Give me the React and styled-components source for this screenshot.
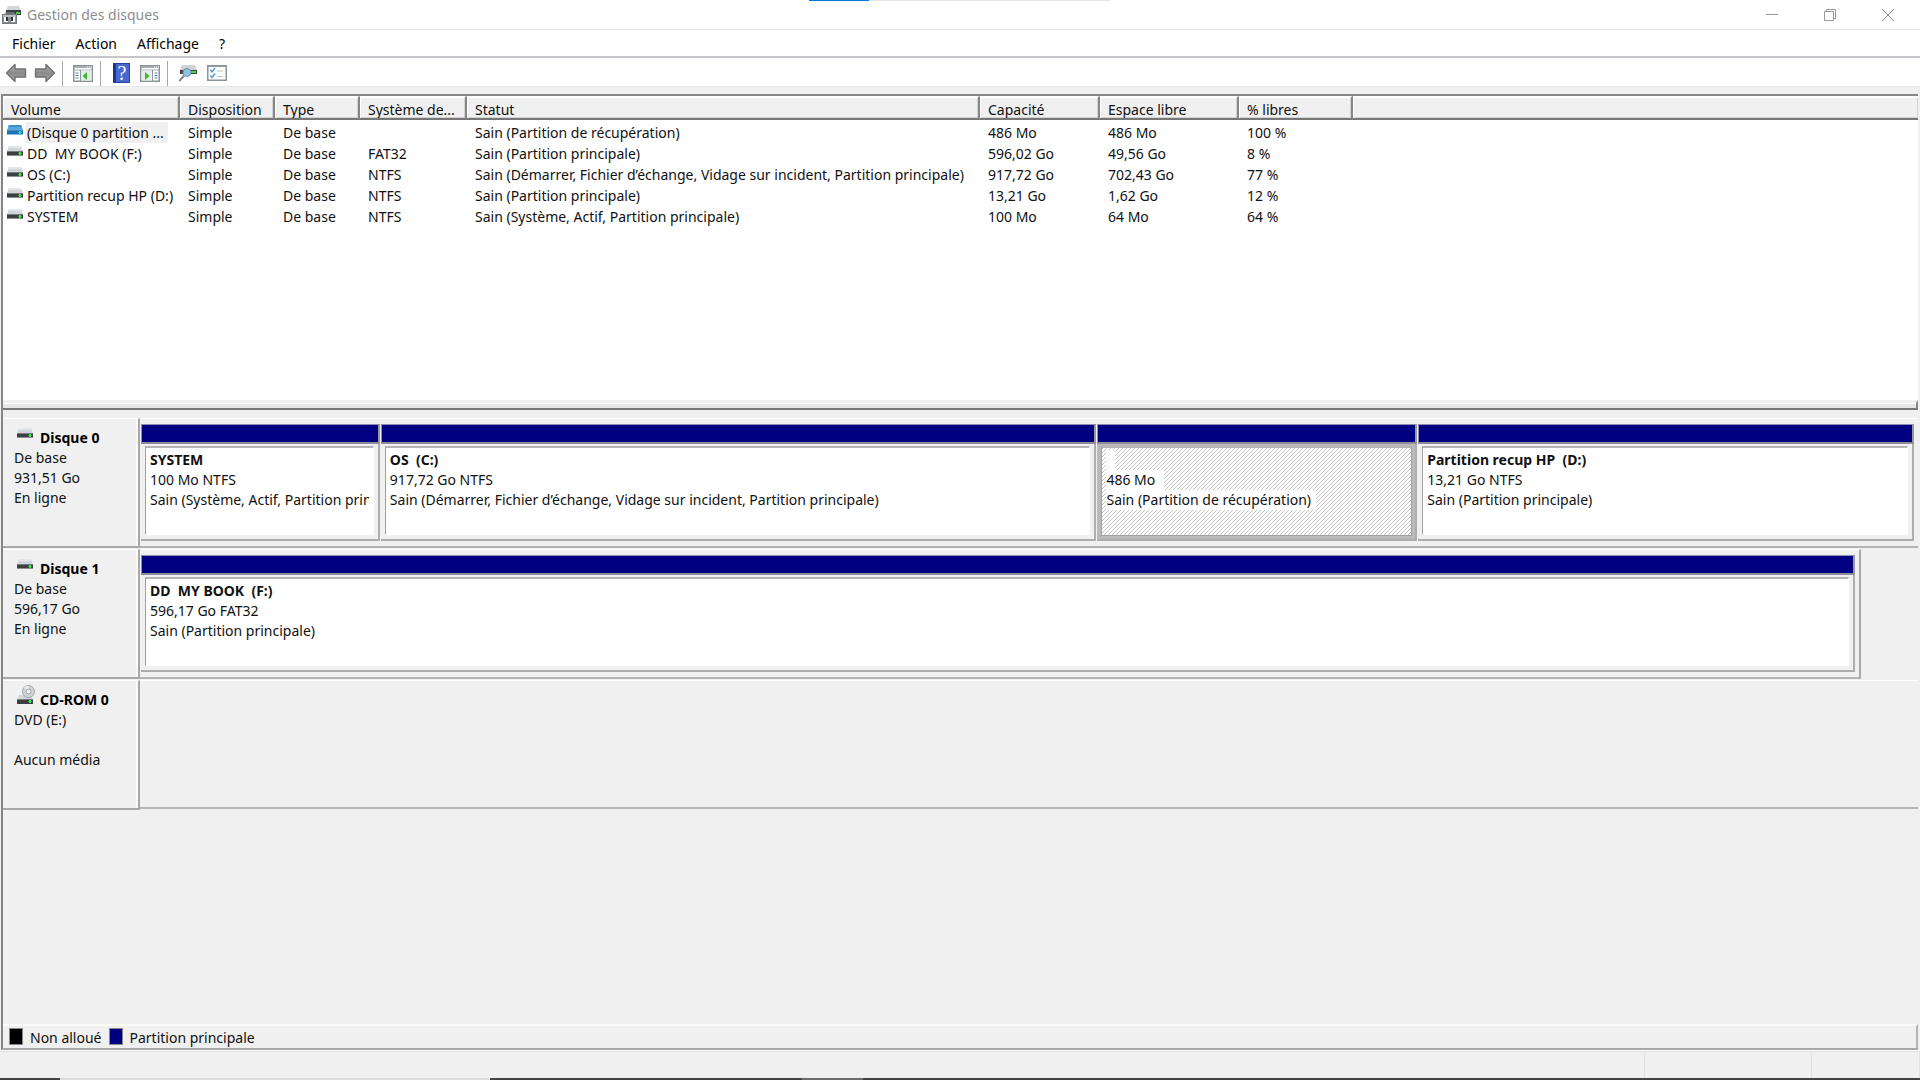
import React from "react";
import styled, { createGlobalStyle } from "styled-components";

const GlobalStyle = createGlobalStyle`
  * {
    box-sizing: border-box;
  }
  body {
    margin: 0;
    background: #f0f0f0;
    color: #111;
    font-family: "Noto Sans", "Open Sans", sans-serif;
    font-size: 14px;
    line-height: 20px;
  }
  button {
    padding: 0;
    border: 0;
    background: none;
    color: inherit;
    font: inherit;
  }
`;

const Window = styled.div`
  display: flex;
  flex-direction: column;
  min-height: 100vh;
`;

/* title bar */

const TitleBar = styled.header`
  display: flex;
  align-items: center;
  height: 30px;
  padding: 0 3px 0 2px;
  background: #fff;
  border-bottom: 1px solid #e6e6e6;
`;
const Title = styled.h1`
  flex: 1;
  margin: 0 0 0 5px;
  color: #8e8e8e;
  font-size: 14px;
  font-weight: 400;
`;
const WindowButton = styled.button`
  display: flex;
  justify-content: center;
  align-items: center;
  width: 58px;
  height: 28px;
`;
const ProgressTrack = styled.div`
  position: absolute;
  top: 0;
  left: 809px;
  width: 301px;
  height: 1px;
  background: #e5e5e5;
`;
const ProgressFill = styled.div`
  width: 20%;
  height: 1px;
  background: #0078d7;
`;

/* menu and tool bars */

const MenuBar = styled.nav`
  display: flex;
  align-items: center;
  gap: 20px;
  height: 28px;
  padding: 2px 12px 0;
  background: #fff;
  border-bottom: 2px solid #c4c4c9;
`;
const MenuButton = styled.button`
  color: #000;
`;
const ToolBar = styled.div`
  display: flex;
  align-items: center;
  height: 29px;
  padding: 2px 4px 0;
  background: #fff;
  border-bottom: 1px solid #e6e6e6;
`;
const ToolButton = styled.button`
  display: flex;
  justify-content: center;
  align-items: center;
  width: 24px;
  height: 24px;
  margin-right: 5px;
`;
const ToolSeparator = styled.div`
  width: 1px;
  height: 25px;
  margin: 0 8px 0 0;
  background: #a8a8a8;
`;

/* panes */

const Panes = styled.main`
  display: flex;
  flex: 1;
  flex-direction: column;
  margin: 7px 2px 0 1px;
  border: 2px solid #a8a8a8;
  border-top-color: #868686;
  border-left-color: #868686;
  border-right: 0;
`;
const VolumePane = styled.section`
  display: flex;
  flex: 316 1 0;
  flex-direction: column;
  background: #fff;
`;
const VolumeArea = styled.div`
  flex: 1;
`;
const Splitter = styled.div`
  height: 10px;
  border-top: 3px solid #f0f0f0;
  border-bottom: 2px solid #777;
  border-right: 2px solid #888;
  background: #e6e6e6;
  box-shadow: inset 0 1px #fff;
`;
const DiskPane = styled.section`
  flex: 611 1 0;
  padding-top: 8px;
  background: #f0f0f0;
`;

/* volume table */

const VolumeTable = styled.table`
  width: 100%;
  border-collapse: separate;
  border-spacing: 0;
  table-layout: fixed;
`;
const HeadCell = styled.th`
  height: 24px;
  padding: 4px 0 0 8px;
  overflow: hidden;
  border-top: 1px solid #fff;
  border-right: ${(props) => (props.$last ? "0" : "2px solid #868686")};
  border-bottom: 2px solid #777;
  background: #f0f0f0;
  box-shadow: inset 1px 1px #fff, inset -1px -1px #d4d4d4;
  font-weight: 400;
  line-height: 17px;
  text-align: left;
  white-space: nowrap;
`;
const Cell = styled.td`
  height: 21px;
  padding: 0 0 0 8px;
  line-height: 21px;
  white-space: pre;
`;
const NameCell = styled(Cell)`
  padding-left: 3px;
`;
const NameHolder = styled.div`
  display: flex;
  align-items: flex-start;
  gap: 1px;

  svg {
    margin-top: 3px;
  }
`;
const VolumeName = styled.span`
  padding: 0 4px 0 2px;
  background: ${(props) => (props.$selected ? "#f0f0f0" : "none")};
`;
const Body = styled.tbody`
  &::before {
    content: "";
    display: block;
    height: 2px;
  }
`;

/* disks */

const DiskRow = styled.article`
  display: flex;
  height: 131px;
`;
const DiskLabel = styled.div`
  flex: none;
  width: 137px;
  height: 130px;
  padding: 9px 0 0 11px;
  border: 1px solid #fff;
  border-right: 2px solid #a8a8a8;
  border-bottom: 2px solid #a8a8a8;
  border-left: 0;
  box-shadow: inset -2px 0 #fafafa;
`;
const DiskHead = styled.div`
  display: flex;
  gap: 6px;
  height: 20px;
  padding-left: 2px;
`;
const DiskName = styled.h2`
  margin: 0;
  color: #000;
  font-size: 14px;
  font-weight: 700;
`;
const Line = styled.div`
  min-height: 20px;
  white-space: pre;
`;
const DiskTrack = styled.div`
  display: flex;
  flex: ${(props) => props.$share} 1 0;
  gap: 1px;
  min-width: 0;
  height: ${(props) => (props.$empty ? "129px" : "130px")};
  padding: 5px 4px 5px 1px;
  border-top: 1px solid #fff;
  border-bottom: 2px solid #b4b4b4;
  border-right: ${(props) => (props.$share < 1000 ? "2px solid #a8a8a8" : "0")};
`;
const TrackRest = styled.div`
  flex: ${(props) => props.$share} 1 0;
`;
const Partition = styled.div`
  display: flex;
  flex: ${(props) => props.$share} 1 0;
  flex-direction: column;
  min-width: 0;
`;
const PartitionBar = styled.div`
  height: 20px;
  border: 1px solid #8c8cb4;
  border-right: 2px solid #999;
  border-bottom: 2px solid #8c8c9c;
  background: #000080;
`;
const PartitionFrame = styled.div`
  flex: 1;
  padding: ${(props) => (props.$selected ? "2px 3px 3px 4px" : "2px 4px 4px 4px")};
  border-right: 2px solid #adadad;
  border-bottom: 2px solid #adadad;
  background: ${(props) => (props.$selected ? "#bababa" : "#f0f0f0")};
`;
const PartitionBody = styled.div`
  height: 100%;
  padding: 2px 4px;
  border: 1px solid ${(props) => (props.$selected ? "#a0a0a0" : "#fff")};
  border-top: 2px solid #b4b4b4;
  border-left: 1px solid #a0a0a0;
  background: ${(props) =>
    props.$selected
      ? "0 0 / 4px 4px linear-gradient(135deg, #c6c6c6 12.5%, #fff 12.5% 50%, #c6c6c6 50% 62.5%, #fff 62.5%)"
      : "#fff"};
`;
const PartitionLine = styled.div`
  height: 20px;
  overflow: hidden;
  font-weight: ${(props) => (props.$bold ? 700 : 400)};
  white-space: pre;
`;
const LineText = styled.span`
  display: inline-block;
  min-width: 9px;
  min-height: 20px;
  padding-right: ${(props) => (props.$selected ? "5px" : "0")};
  background: #fff;
`;

/* legend, status bar, top edge of the task bar */

const Legend = styled.footer`
  display: flex;
  align-items: center;
  gap: 7px;
  height: 24px;
  padding: 1px 0 0 6px;
  border-top: 2px solid #fafafa;
  border-right: 2px solid #b4b4b4;
`;
const Swatch = styled.span`
  width: 14px;
  height: 17px;
  margin-bottom: 2px;
  border: 1px solid #888;
  background: ${(props) => props.$color};
`;
const StatusBar = styled.div`
  display: flex;
  height: 28px;
  padding-top: 2px;
  border-top: 1px solid #fff;
  box-shadow: inset 0 1px #e0e0e0;
`;
const StatusCell = styled.div`
  flex: ${(props) => props.$share} 1 0;
  border-right: 1px solid #e2e2e2;
`;
const TaskBar = styled.div`
  display: flex;
  height: 2px;
  background: #444;
`;
const TaskItem = styled.div`
  flex: ${(props) => props.$share} 1 0;
  background: ${(props) => props.$color};
`;

/* icons */

const DriveIcon = ({ blue }) => (
  <svg width="18" height="12" viewBox="0 0 18 12" aria-hidden="true">
    <path d="M3 0h12l2 5H1z" fill={blue ? "#5aa7dc" : "#d3d6d9"} />
    <path d="M3 0h12l1 2H2z" fill={blue ? "#3d8ec9" : "#e3e5e7"} />
    <rect x="1" y="5" width="16" height="5" fill={blue ? "#1f73b5" : "#3c3f42"} />
    <path d="M1 5.500h16" stroke={blue ? "#3b8fca" : "#777b7e"} />
    <path d="M1 9.500h16" stroke={blue ? "#7db9e2" : "#8c9093"} />
    <rect x="12" y="7" width="4" height="1" fill={blue ? "#2cc0a0" : "#2faa3a"} />
    <rect x="13" y="6" width="2" height="3" fill={blue ? "#35d0b0" : "#47e04c"} />
  </svg>
);

const CdIcon = () => (
  <svg width="18" height="20" viewBox="0 5 18 20" overflow="visible" aria-hidden="true">
    <path d="M3 10h12l2 5H1z" fill="#d3d6d9" />
    <circle cx="12.500" cy="6.500" r="6" fill="#d2d4d6" stroke="#a4a7aa" />
    <path d="M12.500 6.500L8 2.500A6 6 0 0 1 12.500 1z" fill="#eef0f1" />
    <circle cx="12.500" cy="6.500" r="2.500" fill="#f5f5f5" stroke="#a0a3a6" />
    <rect x="1" y="14" width="16" height="5" fill="#3c3f42" />
    <path d="M1 14.500h16" stroke="#777b7e" />
    <rect x="12" y="16" width="4" height="1" fill="#2faa3a" />
    <rect x="13" y="15" width="2" height="3" fill="#47e04c" />
  </svg>
);

const AppIcon = () => (
  <svg width="20" height="20" viewBox="0 0 20 20" aria-hidden="true">
    <path d="M6 1h11l2 5H4z" fill="#d3d6d9" />
    <rect x="4" y="5" width="15" height="5" fill="#3c3f42" />
    <rect x="14" y="7" width="4" height="2" fill="#3fd447" />
    <path d="M3 10V8h9v2" fill="none" stroke="#999b9d" />
    <rect x="0.500" y="9.500" width="14" height="9" fill="#8b8e90" stroke="#77797b" />
    <rect x="1" y="10" width="13" height="2" fill="#b9bbbd" />
    <rect x="2" y="12" width="4" height="5" fill="#fff" />
    <rect x="4" y="12" width="2" height="4" fill="#333" />
    <rect x="9" y="12" width="4" height="5" fill="#fff" />
    <rect x="9" y="12" width="2" height="4" fill="#333" />
  </svg>
);

const ArrowIcon = ({ right }) => (
  <svg width="22" height="20" viewBox="0 0 22 20" aria-hidden="true">
    <defs>
      <linearGradient id="arrow" x1="0" y1="0" x2="0" y2="1">
        <stop offset="0" stopColor="#b8b8b8" />
        <stop offset="0.500" stopColor="#8a8a8a" />
        <stop offset="1" stopColor="#aaa" />
      </linearGradient>
    </defs>
    <path
      d="M1.500 10L10 1.500V6h10.500v8H10v4.500z"
      transform={right ? "matrix(-1 0 0 1 22 0)" : undefined}
      fill="url(#arrow)"
      stroke="#707070"
      strokeWidth="1.400"
      strokeLinejoin="round"
    />
  </svg>
);

const PaneIcon = ({ right }) => (
  <svg width="20" height="17" viewBox="0 0 20 17" aria-hidden="true">
    <rect x="0.750" y="0.750" width="18.500" height="15.500" fill="#fff" stroke="#8a929a" strokeWidth="1.500" />
    <rect x="1" y="1" width="18" height="2" fill="#a3abb3" />
    <path d="M1 5h18" stroke="#a3abb3" />
    <path d="M14 2h1M16 2h1M18 2h1" stroke="#fff" />
    {right ? (
      <>
        <rect x="1.500" y="5.500" width="10" height="10" fill="#e6ebe9" />
        <path d="M12.500 5v11" stroke="#8a929a" />
        <path d="M14.500 8h3M14.500 10.500h3M14.500 13h3" stroke="#4a80c0" />
        <path d="M5 7v8l4.500-4z" fill="#3eb82c" />
      </>
    ) : (
      <>
        <rect x="8" y="5.500" width="10.500" height="10" fill="#e6ebe9" />
        <path d="M7.500 5v11" stroke="#8a929a" />
        <path d="M2.500 8h3M2.500 10.500h3M2.500 13h3" stroke="#4a80c0" />
        <path d="M14 7v8l-4.500-4z" fill="#3eb82c" />
      </>
    )}
  </svg>
);

const HelpMark = styled.span`
  display: flex;
  justify-content: center;
  align-items: center;
  width: 17px;
  height: 20px;
  border: 1px solid #2440a0;
  border-left: 3px solid #1c348c;
  background: #4868d0;
  color: #fff;
  font-family: "Liberation Serif", serif;
  font-size: 20px;
`;

const FindDriveIcon = () => (
  <svg width="20" height="18" viewBox="0 0 20 18" overflow="visible" aria-hidden="true">
    <path d="M4 1h13l2 5H2z" fill="#cfd3d6" />
    <rect x="2" y="6" width="17" height="4" fill="#3f4346" />
    <path d="M13 8h5" stroke="#42dc48" strokeWidth="2" />
    <path d="M6 11.500L1.500 17" stroke="#7e8b96" strokeWidth="2" />
    <circle cx="9" cy="8.500" r="4" fill="#8fc0e0" stroke="#7594aa" />
  </svg>
);

const ChecklistIcon = () => (
  <svg width="20" height="16" viewBox="0 0 20 16" aria-hidden="true">
    <rect x="0.750" y="0.750" width="18.500" height="14.500" fill="#fdfdfd" stroke="#8a929a" strokeWidth="1.500" />
    <path d="M1 1.500h18" stroke="#929aa2" />
    <path d="M3.500 5l1.500 2 3-4M3.500 10.500l1.500 2 3-4" fill="none" stroke="#3a9be0" strokeWidth="1.300" />
    <path d="M10 6h6M10 11.500h6" stroke="#c4c4c4" />
  </svg>
);

const columns = [
  { name: "Volume", width: 177 },
  { name: "Disposition", width: 95 },
  { name: "Type", width: 85 },
  { name: "Système de...", width: 107 },
  { name: "Statut", width: 513 },
  { name: "Capacité", width: 120 },
  { name: "Espace libre", width: 139 },
  { name: "% libres", width: 114 },
];

const volumes = [
  ["(Disque 0 partition ...", "Simple", "De base", "", "Sain (Partition de récupération)", "486 Mo", "486 Mo", "100 %"],
  ["DD  MY BOOK (F:)", "Simple", "De base", "FAT32", "Sain (Partition principale)", "596,02 Go", "49,56 Go", "8 %"],
  ["OS (C:)", "Simple", "De base", "NTFS", "Sain (Démarrer, Fichier d’échange, Vidage sur incident, Partition principale)", "917,72 Go", "702,43 Go", "77 %"],
  ["Partition recup HP (D:)", "Simple", "De base", "NTFS", "Sain (Partition principale)", "13,21 Go", "1,62 Go", "12 %"],
  ["SYSTEM", "Simple", "De base", "NTFS", "Sain (Système, Actif, Partition principale)", "100 Mo", "64 Mo", "64 %"],
];

const disks = [
  {
    name: "Disque 0",
    lines: ["De base", "931,51 Go", "En ligne"],
    share: 1000,
    partitions: [
      { share: 239, name: "SYSTEM", size: "100 Mo NTFS", status: "Sain (Système, Actif, Partition principale)" },
      { share: 716, name: "OS  (C:)", size: "917,72 Go NTFS", status: "Sain (Démarrer, Fichier d’échange, Vidage sur incident, Partition principale)" },
      { share: 320, name: "", size: "486 Mo ", status: "Sain (Partition de récupération)", selected: true },
      { share: 496, name: "Partition recup HP  (D:)", size: "13,21 Go NTFS", status: "Sain (Partition principale)" },
    ],
  },
  {
    name: "Disque 1",
    lines: ["De base", "596,17 Go", "En ligne"],
    share: 968,
    partitions: [
      { share: 1, name: "DD  MY BOOK  (F:)", size: "596,17 Go FAT32", status: "Sain (Partition principale)" },
    ],
  },
  {
    name: "CD-ROM 0",
    cd: true,
    lines: ["DVD (E:)", "", "Aucun média"],
    share: 1000,
    partitions: [],
  },
];

const PartitionBox = ({ part }) => (
  <Partition $share={part.share}>
    <PartitionBar />
    <PartitionFrame $selected={part.selected}>
      <PartitionBody $selected={part.selected}>
        <PartitionLine $bold>
          <LineText>{part.name}</LineText>
        </PartitionLine>
        <PartitionLine>
          <LineText $selected={part.selected}>{part.size}</LineText>
        </PartitionLine>
        <PartitionLine>
          <LineText $selected={part.selected}>{part.status}</LineText>
        </PartitionLine>
      </PartitionBody>
    </PartitionFrame>
  </Partition>
);

const App = () => {
  return (
    <Window>
      <GlobalStyle />
      <TitleBar>
        <AppIcon />
        <Title>Gestion des disques</Title>
        <WindowButton aria-label="Réduire">
          <svg width="12" height="12" viewBox="0 0 12 12">
            <path d="M0 5.500h12" stroke="#999" />
          </svg>
        </WindowButton>
        <WindowButton aria-label="Restaurer">
          <svg width="12" height="12" viewBox="0 0 12 12">
            <path d="M0.500 2.500h9v9h-9zM2.500 2V0.500h9v9H10" fill="none" stroke="#999" />
          </svg>
        </WindowButton>
        <WindowButton aria-label="Fermer">
          <svg width="12" height="12" viewBox="0 0 12 12">
            <path d="M0 0l12 12M12 0L0 12" stroke="#888" />
          </svg>
        </WindowButton>
      </TitleBar>
      <ProgressTrack>
        <ProgressFill />
      </ProgressTrack>
      <MenuBar>
        <MenuButton>Fichier</MenuButton>
        <MenuButton>Action</MenuButton>
        <MenuButton>Affichage</MenuButton>
        <MenuButton>?</MenuButton>
      </MenuBar>
      <ToolBar>
        <ToolButton aria-label="Précédent">
          <ArrowIcon />
        </ToolButton>
        <ToolButton aria-label="Suivant">
          <ArrowIcon right />
        </ToolButton>
        <ToolSeparator />
        <ToolButton aria-label="Arborescence">
          <PaneIcon />
        </ToolButton>
        <ToolSeparator />
        <ToolButton aria-label="Aide">
          <HelpMark>?</HelpMark>
        </ToolButton>
        <ToolButton aria-label="Volet Actions">
          <PaneIcon right />
        </ToolButton>
        <ToolSeparator />
        <ToolButton aria-label="Analyser">
          <FindDriveIcon />
        </ToolButton>
        <ToolButton aria-label="Propriétés">
          <ChecklistIcon />
        </ToolButton>
      </ToolBar>
      <Panes>
        <VolumePane>
          <VolumeArea>
            <VolumeTable>
              <colgroup>
                {columns.map((col) => (
                  <col key={col.name} width={col.width} />
                ))}
                <col />
              </colgroup>
              <thead>
                <tr>
                  {columns.map((col) => (
                    <HeadCell key={col.name}>{col.name}</HeadCell>
                  ))}
                  <HeadCell $last />
                </tr>
              </thead>
              <Body>
                {volumes.map(([name, ...cells], row) => (
                  <tr key={name}>
                    <NameCell>
                      <NameHolder>
                        <DriveIcon blue={row === 0} />
                        <VolumeName $selected={row === 0}>{name}</VolumeName>
                      </NameHolder>
                    </NameCell>
                    {cells.map((cell, i) => (
                      <Cell key={i}>{cell}</Cell>
                    ))}
                  </tr>
                ))}
              </Body>
            </VolumeTable>
          </VolumeArea>
          <Splitter />
        </VolumePane>
        <DiskPane>
          {disks.map((disk) => (
            <DiskRow key={disk.name}>
              <DiskLabel>
                <DiskHead>
                  {disk.cd ? <CdIcon /> : <DriveIcon />}
                  <DiskName>{disk.name}</DiskName>
                </DiskHead>
                {disk.lines.map((line, i) => (
                  <Line key={i}>{line}</Line>
                ))}
              </DiskLabel>
              <DiskTrack $share={disk.share} $empty={disk.cd}>
                {disk.partitions.map((part) => (
                  <PartitionBox key={part.size} part={part} />
                ))}
              </DiskTrack>
              {disk.share < 1000 && <TrackRest $share={1000 - disk.share} />}
            </DiskRow>
          ))}
        </DiskPane>
        <Legend>
          <Swatch $color="#000" />
          <span>Non alloué</span>
          <Swatch $color="#000080" />
          <span>Partition principale</span>
        </Legend>
      </Panes>
      <StatusBar>
        <StatusCell $share={1645} />
        <StatusCell $share={166} />
        <StatusCell $share={107} />
      </StatusBar>
      <TaskBar>
        <TaskItem $share={60} $color="#444" />
        <TaskItem $share={430} $color="#dcdcdc" />
        <TaskItem $share={312} $color="#444" />
        <TaskItem $share={61} $color="#6c6c6c" />
        <TaskItem $share={1057} $color="#444" />
      </TaskBar>
    </Window>
  );
};

export default App;
